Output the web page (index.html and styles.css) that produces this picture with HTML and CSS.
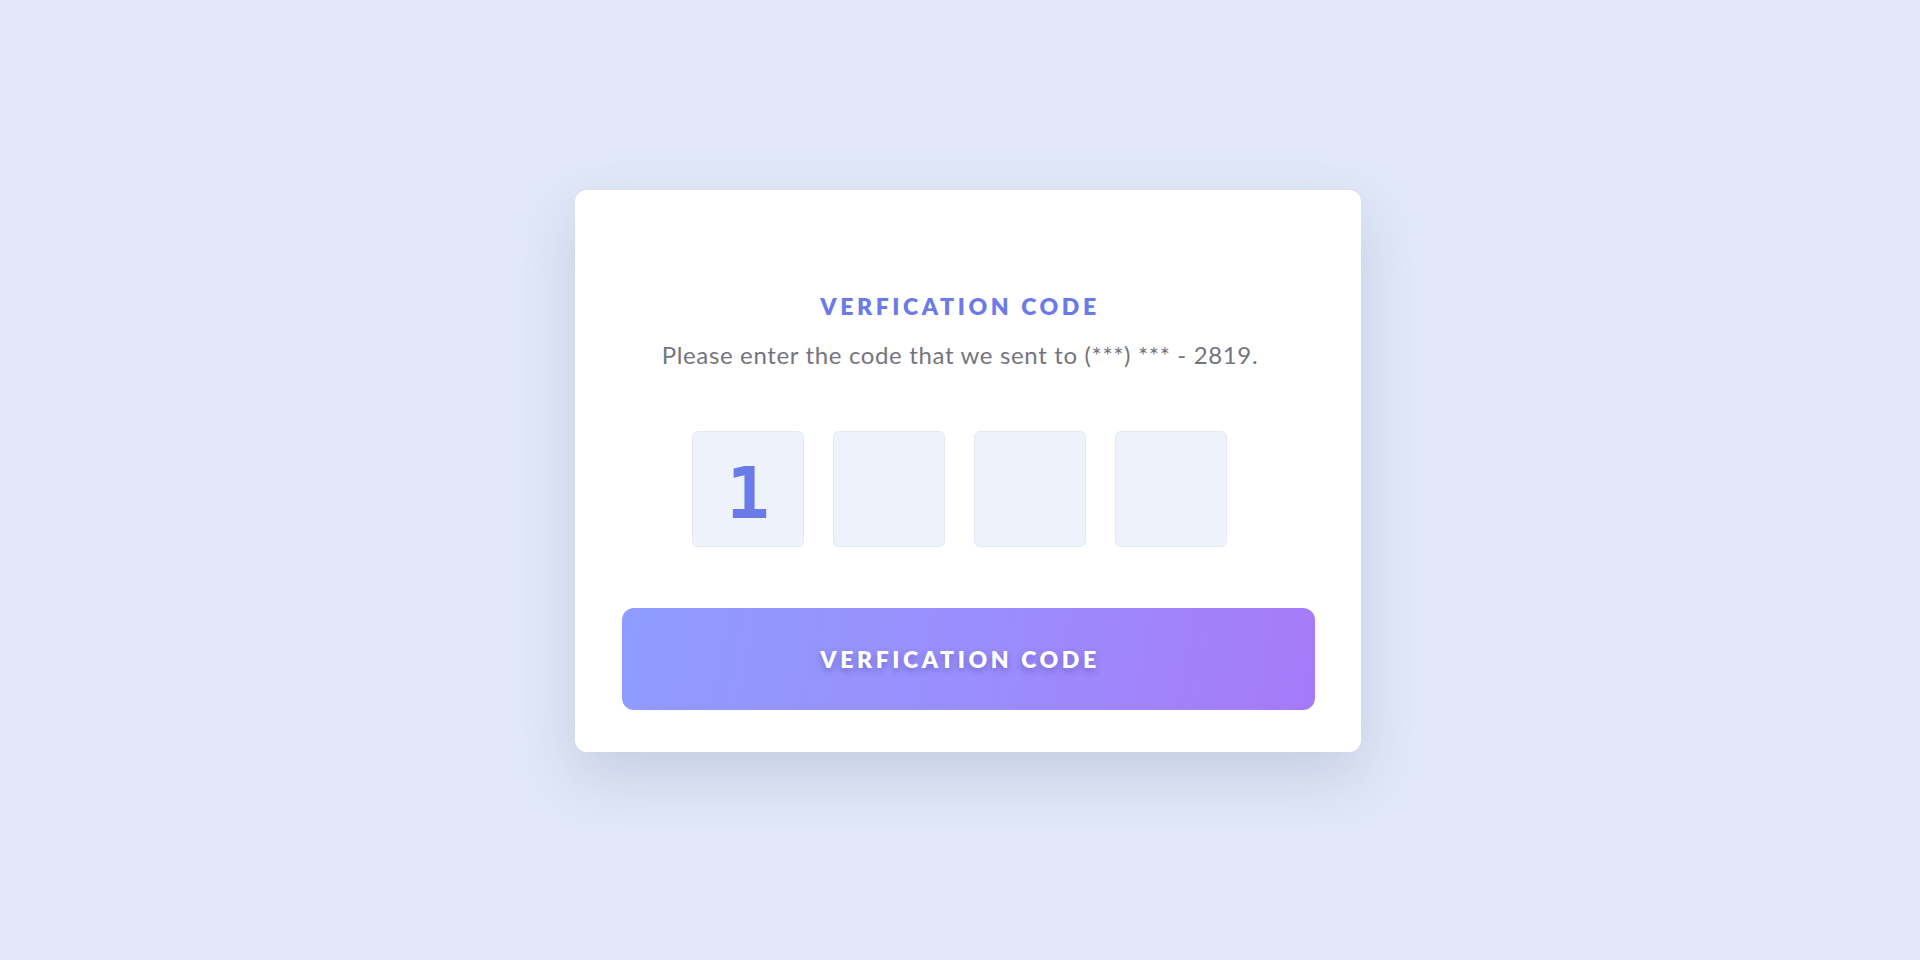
FILE: index.html
```html
<!DOCTYPE html>
<html lang="en">
<head>
<meta charset="utf-8">
<title>Verification code</title>
<link rel="stylesheet" href="styles.css">
</head>
<body>
<main class="page">
  <section class="card">
    <div class="intro">
      <h1 class="title">VERFICATION CODE</h1>
      <p class="subtitle">Please enter the code that we sent to (***) *** - 2819.</p>
    </div>
    <div class="code-row">
      <div class="code-box filled">1</div>
      <div class="code-box"></div>
      <div class="code-box"></div>
      <div class="code-box"></div>
    </div>
    <button class="submit" type="button"><span class="submit-label">VERFICATION CODE</span></button>
  </section>
</main>
</body>
</html>
```
FILE: styles.css
```css
* { box-sizing: border-box; }
html, body { margin: 0; padding: 0; }
body {
  background: #e2e8f7;
  font-family: "Lato", "Noto Sans", sans-serif;
}
.page {
  height: 960px;
  display: flex;
  align-items: center;
  justify-content: center;
  padding: 0 0 18px 16px;
}
.card {
  width: 786px;
  height: 562px;
  background: #ffffff;
  border-radius: 12px;
  box-shadow: 0 24px 60px rgba(120, 135, 175, 0.28);
  padding: 101px 46px 42px 47px;
  display: flex;
  flex-direction: column;
}
.intro {
  padding-right: 17px;
  text-align: center;
}
.title {
  margin: 0;
  font-size: 23px;
  line-height: 30px;
  font-weight: 800;
  letter-spacing: 3.6px;
  color: #6a7be9;
}
.subtitle {
  margin: 18px 0 0;
  font-size: 24px;
  line-height: 32px;
  font-weight: 400;
  letter-spacing: 0.65px;
  color: #74747f;
}
.code-row {
  margin-top: 60px;
  display: flex;
  gap: 29px;
  padding-left: 70px;
}
.code-box {
  width: 112px;
  height: 116px;
  background: #eef2fa;
  border: 1px solid #e4e8f2;
  border-radius: 6px;
  display: flex;
  align-items: center;
  justify-content: center;
  font-family: "DejaVu Sans Mono", "Liberation Mono", monospace;
  font-weight: 700;
  font-size: 72px;
  color: #6a7be9;
  padding-top: 8px;
}
.submit {
  margin-top: 61px;
  height: 102px;
  width: 100%;
  border: none;
  border-radius: 12px;
  background: linear-gradient(100deg, #8f9cff 0%, #9a8efc 50%, #a67afa 100%);
  padding: 0 17px 0 0;
  font-family: "Lato", "Noto Sans", sans-serif;
  font-size: 23px;
  font-weight: 800;
  letter-spacing: 3.6px;
  color: #ffffff;
  text-shadow: 0 3px 6px rgba(70, 60, 150, 0.45);
}
```
